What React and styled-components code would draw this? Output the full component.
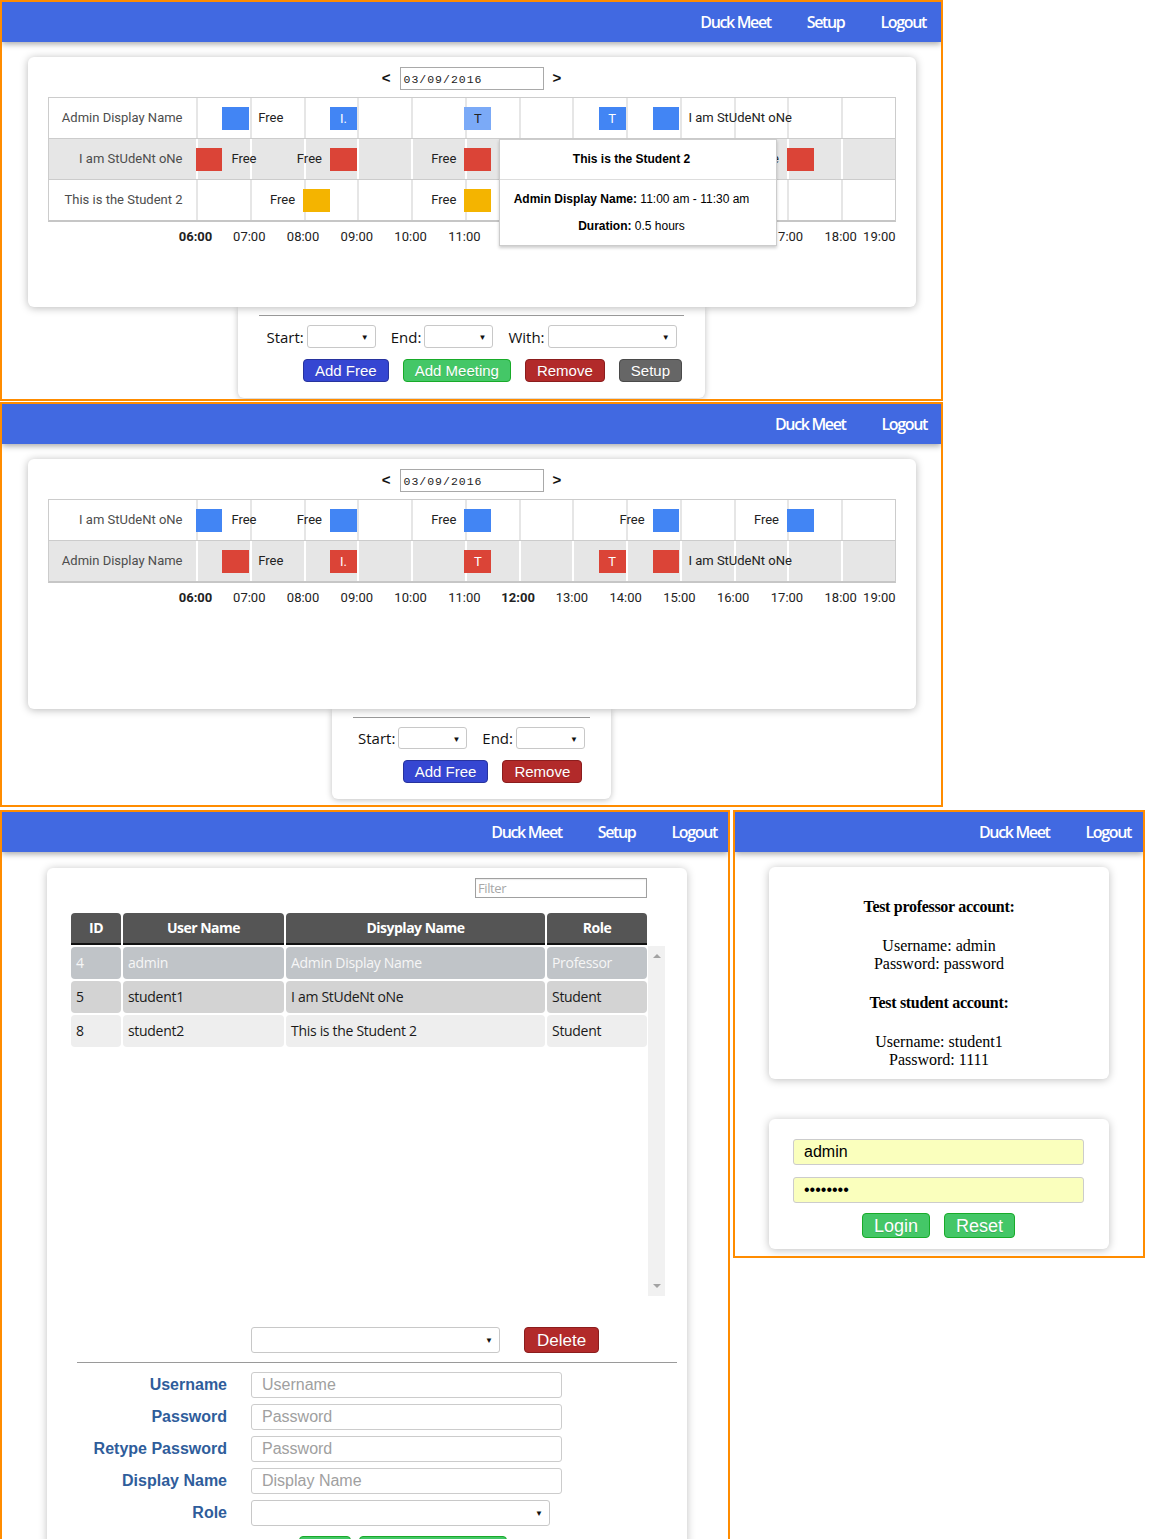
import React from 'react'
import styled, { createGlobalStyle } from 'styled-components'

const HOUR = 699 / 13
const BLUE = '#4285f4'
const RED = '#db4437'
const YELLOW = '#f4b400'
const HOVER = '#7baaf7'

const GlobalStyle = createGlobalStyle`
  html, body {
    margin: 0;
    padding: 0;
    background: #fff;
  }
  body {
    font-family: "Liberation Sans", Arial, sans-serif;
    color: #000;
  }
  * {
    box-sizing: border-box;
  }
`

const Collage = styled.div`
  width: 1151px;
  height: 1539px;
  overflow: hidden;
  display: flex;
  flex-direction: column;
  gap: 1px;
`

const BottomRow = styled.div`
  display: flex;
  align-items: flex-start;
  gap: 3px;
  margin-top: 2px;
`

const Frame = styled.section`
  width: ${p => p.$w}px;
  height: ${p => p.$h}px;
  flex: none;
  border: 2px solid #ff8c00;
  background: #fff;
  overflow: hidden;
  display: flex;
  flex-direction: column;
`

const TopBar = styled.header`
  flex: none;
  height: 40px;
  background: #4169e1;
  box-shadow: 0 2px 6px rgba(0, 0, 0, 0.35);
  display: flex;
  justify-content: flex-end;
  align-items: center;
  gap: 36px;
  padding-right: ${p => p.$pr || 14}px;
  position: relative;
  z-index: 3;
`

const NavLink = styled.span`
  color: #fff;
  font-family: "Open Sans", sans-serif;
  font-weight: 600;
  font-size: 16px;
  letter-spacing: -1.35px;
`

/* schedule card */

const ScheduleCard = styled.div`
  position: relative;
  z-index: 2;
  width: 888px;
  height: 250px;
  margin: 15px auto 0;
  padding: 10px 20px 0;
  background: #fff;
  border-radius: 6px;
  box-shadow: 0 1px 8px rgba(0, 0, 0, 0.28);
`

const DateRow = styled.div`
  display: flex;
  justify-content: center;
  align-items: center;
  gap: 9px;
  height: 23px;
`

const Chevron = styled.span`
  font-size: 15px;
  font-weight: bold;
  color: #111;
  margin-top: -3px;
`

const DateInput = styled.div`
  width: 144px;
  height: 23px;
  border: 1px solid #a9a9a9;
  padding: 0 3px;
  font-family: "Liberation Mono", monospace;
  font-size: 11.5px;
  letter-spacing: 1px;
  line-height: 23px;
  color: #222;
`

const ChartBox = styled.div`
  position: relative;
  margin-top: 7px;
  border: 1px solid #ccc;
  border-bottom: 2px solid #c6c6c6;
`

const ChartRow = styled.div`
  display: grid;
  grid-template-columns: 147px 699px;
  height: 40px;
  background: ${p => (p.$shade ? '#e6e6e6' : '#fff')};
  & + & {
    height: 41px;
    border-top: 1px solid #ccc;
  }
`

const RowLabel = styled.div`
  font-family: Roboto, sans-serif;
  font-size: 13px;
  color: #4d4d4d;
  text-align: right;
  padding-right: 13px;
  line-height: 40px;
  white-space: nowrap;
`

const Track = styled.div`
  position: relative;
  height: 40px;
  background-image: repeating-linear-gradient(
    to right,
    ${p => (p.$shade ? '#fff' : '#e6e6e6')} 0 2px,
    transparent 2px ${HOUR}px
  );
`

const Bar = styled.div`
  position: absolute;
  top: 9px;
  height: 23px;
  background: ${p => p.$color};
  color: ${p => (p.$dark ? '#222' : '#fff')};
  font-family: Roboto, sans-serif;
  font-size: 13px;
  line-height: 23px;
  text-align: center;
`

const BarText = styled.span`
  position: absolute;
  top: 0;
  line-height: 40px;
  font-family: Roboto, sans-serif;
  font-size: 13px;
  color: #222;
  white-space: nowrap;
`

const Axis = styled.div`
  position: relative;
  height: 30px;
  width: 699px;
  margin-left: 148px;
  font-family: Roboto, sans-serif;
  font-size: 13px;
  color: #222;
`

const AxisTick = styled.span`
  position: absolute;
  top: 7px;
  font-weight: ${p => (p.$bold ? 'bold' : 'normal')};
  ${p => (p.$end ? 'right: -1px;' : 'transform: translateX(-50%);')}
`

const Tooltip = styled.div`
  position: absolute;
  left: 450px;
  top: 41px;
  z-index: 5;
  width: 278px;
  height: 107px;
  background: #fff;
  border: 1px solid #ccc;
  box-shadow: 0 2px 3px rgba(0, 0, 0, 0.2);
  font-family: "Liberation Sans", Arial, sans-serif;
  font-size: 12px;
  text-align: center;
  color: #000;
`

const TipTitle = styled.div`
  height: 40px;
  line-height: 38px;
  font-weight: bold;
  padding-right: 12px;
  border-bottom: 1px solid #ddd;
`

const TipBody = styled.div`
  display: flex;
  flex-direction: column;
  gap: 9px;
  padding: 10px 12px 0 0;
  line-height: 18px;
  b {
    font-weight: bold;
  }
`

/* controls under schedule */

const ControlsCard = styled.div`
  width: ${p => p.$w}px;
  margin: 0 auto;
  padding: 8px 21px 16px;
  background: #fff;
  border-radius: 0 0 6px 6px;
  box-shadow: 0 1px 6px rgba(0, 0, 0, 0.25);
`

const Rule = styled.div`
  border-top: 1px solid #9a9a9a;
  margin: ${p => p.$m || '0'};
`

const FieldRow = styled.div`
  display: flex;
  justify-content: center;
  align-items: center;
  gap: 15px;
  margin-top: 9px;
`

const Field = styled.label`
  display: flex;
  align-items: center;
  gap: 3px;
  font-family: "Open Sans", sans-serif;
  font-size: 15px;
  color: #111;
`

const FakeSelect = styled.div`
  width: ${p => p.$w}px;
  height: ${p => p.$h || 23}px;
  border: 1px solid #c8c8c8;
  border-radius: 3px;
  background: #fff;
  display: flex;
  justify-content: flex-end;
  align-items: center;
  padding-right: 6px;
  &::after {
    content: '▼';
    font-size: 8px;
    color: #111;
  }
`

const ButtonRow = styled.div`
  display: flex;
  justify-content: center;
  gap: 14px;
  padding-left: 42px;
  margin-top: 11px;
`

const tones = {
  blue: ['#3546d2', '#27339e'],
  green: ['#44c767', '#18ab29'],
  red: ['#b22a2a', '#8b1d1d'],
  grey: ['#666', '#4a4a4a'],
}

const Btn = styled.button`
  height: ${p => p.$h || 23}px;
  width: ${p => (p.$w ? `${p.$w}px` : 'auto')};
  padding: 0 ${p => p.$px || 11}px;
  border: 1px solid ${p => tones[p.$tone][1]};
  border-radius: 4px;
  background: ${p => tones[p.$tone][0]};
  color: #fff;
  font-family: "Liberation Sans", Arial, sans-serif;
  font-size: ${p => p.$fs || 15}px;
  line-height: 1;
  text-shadow: 0 1px 0 rgba(0, 0, 0, 0.15);
`

/* admin page */

const AdminCard = styled.div`
  position: relative;
  z-index: 1;
  width: 640px;
  min-height: 720px;
  margin: 16px 0 0 45px;
  padding: 10px 0 0 24px;
  background: #fff;
  border-radius: 6px;
  box-shadow: 0 1px 8px rgba(0, 0, 0, 0.25);
`

const FilterRow = styled.div`
  display: flex;
  justify-content: flex-end;
  width: 576px;
`

const FilterInput = styled.input`
  width: 172px;
  height: 20px;
  border: 1px solid #a0a0a0;
  box-shadow: inset 0 1px 1px rgba(0, 0, 0, 0.08);
  padding: 0 2px;
  font-family: "Open Sans", sans-serif;
  font-size: 13px;
  letter-spacing: -0.4px;
  outline: none;
  &::placeholder {
    color: #a8a8a8;
  }
`

const GridCols = styled.div`
  display: grid;
  grid-template-columns: 50px 161px 259px 100px;
  gap: 2px;
  width: 576px;
`

const HeadRow = styled(GridCols)`
  margin-top: 15px;
`

const HeadCell = styled.div`
  height: 30px;
  background: #555;
  border-radius: 4px 4px 0 0;
  box-shadow: 0 2px 0 #111;
  color: #fff;
  font-family: "Open Sans", sans-serif;
  font-weight: 700;
  font-size: 14px;
  letter-spacing: -0.5px;
  line-height: 30px;
  text-align: center;
`

const BodyArea = styled.div`
  display: flex;
  margin-top: 3px;
`

const RowsCol = styled.div`
  display: flex;
  flex-direction: column;
  gap: 2px;
  padding-top: 1px;
  width: 576px;
`

const rowTones = {
  active: ['#c0c4c8', '#f6f6f6'],
  mid: ['#d3d3d3', '#1a1a1a'],
  light: ['#eeeeee', '#1a1a1a'],
}

const DataCell = styled.div`
  height: 32px;
  padding-left: 5px;
  border-radius: 4px;
  background: ${p => rowTones[p.$tone][0]};
  color: ${p => rowTones[p.$tone][1]};
  font-family: "Open Sans", sans-serif;
  font-size: 14px;
  letter-spacing: -0.3px;
  line-height: 32px;
  white-space: nowrap;
`

const ScrollTrack = styled.div`
  width: 17px;
  height: 350px;
  margin-left: 1px;
  padding: 8px 0;
  background: #f1f1f1;
  display: flex;
  flex-direction: column;
  justify-content: space-between;
  align-items: center;
`

const ScrollArrow = styled.span`
  width: 0;
  height: 0;
  border-left: 4px solid transparent;
  border-right: 4px solid transparent;
  ${p => (p.$down ? 'border-top: 4px solid #a3a3a3;' : 'border-bottom: 4px solid #a3a3a3;')}
`

const EditSection = styled.div`
  margin: 31px 10px 0 6px;
`

const FormGrid = styled.div`
  display: grid;
  grid-template-columns: 150px ${p => p.$second || '311px'} ${p => p.$third || ''};
  column-gap: 24px;
  row-gap: 6px;
  align-items: center;
  margin-top: ${p => p.$mt || 0}px;
`

const FormLabel = styled.label`
  text-align: right;
  font-weight: bold;
  font-size: 16px;
  color: #2f5d9b;
  line-height: 26px;
`

const TextInput = styled.input`
  width: 311px;
  height: 26px;
  border: 1px solid #ccc;
  border-radius: 3px;
  padding: 0 10px;
  font-family: "Liberation Sans", Arial, sans-serif;
  font-size: 16px;
  outline: none;
  &::placeholder {
    color: #a0a0a0;
  }
`

const FormButtons = styled.div`
  display: flex;
  gap: 8px;
  padding-left: 48px;
  margin-top: 4px;
`

/* login page */

const InfoCard = styled.div`
  width: 340px;
  margin: 15px auto 0;
  padding: 30px 0 10px;
  background: #fff;
  border-radius: 6px;
  box-shadow: 0 1px 8px rgba(0, 0, 0, 0.25);
  display: flex;
  flex-direction: column;
  gap: 20px;
  text-align: center;
  font-family: "Liberation Serif", "Times New Roman", serif;
`

const InfoTitle = styled.h4`
  margin: 0;
  font-size: 16px;
  font-weight: bold;
  letter-spacing: -0.3px;
  line-height: 20px;
`

const InfoText = styled.p`
  margin: 0;
  font-size: 16px;
  line-height: 18px;
`

const LoginCard = styled.div`
  width: 340px;
  margin: 40px auto 0;
  padding: 20px 25px 11px 24px;
  background: #fff;
  border-radius: 6px;
  box-shadow: 0 1px 8px rgba(0, 0, 0, 0.25);
  display: flex;
  flex-direction: column;
  gap: 12px;
`

const LoginInput = styled.input`
  width: 100%;
  height: 26px;
  background: #faffbd;
  border: 1px solid #ccc;
  border-radius: 3px;
  padding: 0 10px;
  font-family: "Liberation Sans", Arial, sans-serif;
  font-size: 16px;
  color: #000;
  outline: none;
`

const LoginButtons = styled.div`
  display: flex;
  justify-content: center;
  gap: 14px;
  margin-top: -2px;
`

/* data */

const firstRows = [
  {
    name: 'Admin Display Name',
    color: BLUE,
    bars: [
      { at: 6.5, text: 'Free', side: 'right' },
      { at: 8.5, text: 'I.', side: 'in' },
      { at: 11, text: 'T', side: 'in', hover: true },
      { at: 13.5, text: 'T', side: 'in' },
      { at: 14.5, text: 'I am StUdeNt oNe', side: 'right' },
    ],
  },
  {
    name: 'I am StUdeNt oNe',
    color: RED,
    bars: [
      { at: 6, text: 'Free', side: 'right' },
      { at: 8.5, text: 'Free', side: 'left' },
      { at: 11, text: 'Free', side: 'left' },
      { at: 17, text: 'Free', side: 'left' },
    ],
  },
  {
    name: 'This is the Student 2',
    color: YELLOW,
    bars: [
      { at: 8, text: 'Free', side: 'left' },
      { at: 11, text: 'Free', side: 'left' },
    ],
  },
]

const secondRows = [
  {
    name: 'I am StUdeNt oNe',
    color: BLUE,
    bars: [
      { at: 6, text: 'Free', side: 'right' },
      { at: 8.5, text: 'Free', side: 'left' },
      { at: 11, text: 'Free', side: 'left' },
      { at: 14.5, text: 'Free', side: 'left' },
      { at: 17, text: 'Free', side: 'left' },
    ],
  },
  {
    name: 'Admin Display Name',
    color: RED,
    bars: [
      { at: 6.5, text: 'Free', side: 'right' },
      { at: 8.5, text: 'I.', side: 'in' },
      { at: 11, text: 'T', side: 'in' },
      { at: 13.5, text: 'T', side: 'in' },
      { at: 14.5, text: 'I am StUdeNt oNe', side: 'right' },
    ],
  },
]

const users = [
  { id: 4, user: 'admin', display: 'Admin Display Name', role: 'Professor', tone: 'active' },
  { id: 5, user: 'student1', display: 'I am StUdeNt oNe', role: 'Student', tone: 'mid' },
  { id: 8, user: 'student2', display: 'This is the Student 2', role: 'Student', tone: 'light' },
]

const allHours = [6, 7, 8, 9, 10, 11, 12, 13, 14, 15, 16, 17, 18, 19]
// hours 12-16 sit under the open tooltip in the first view
const visibleHours = [6, 7, 8, 9, 10, 11, 17, 18, 19]

const Nav = ({ items, pr }) => (
  <TopBar $pr={pr}>
    {items.map(item => (
      <NavLink key={item}>{item}</NavLink>
    ))}
  </TopBar>
)

const Timeline = ({ rows, hours, boldHours, tooltip }) => (
  <>
    <ChartBox>
      {rows.map((row, i) => (
        <ChartRow key={row.name} $shade={i % 2 === 1}>
          <RowLabel>{row.name}</RowLabel>
          <Track $shade={i % 2 === 1}>
            {row.bars.map((b, j) => {
              const left = (b.at - 6) * HOUR
              const width = HOUR / 2
              return (
                <React.Fragment key={j}>
                  <Bar style={{ left, width }} $color={b.hover ? HOVER : row.color} $dark={b.hover}>
                    {b.side === 'in' ? b.text : null}
                  </Bar>
                  {b.side === 'right' && <BarText style={{ left: left + width + 9 }}>{b.text}</BarText>}
                  {b.side === 'left' && <BarText style={{ right: 699 - left + 8 }}>{b.text}</BarText>}
                </React.Fragment>
              )
            })}
          </Track>
        </ChartRow>
      ))}
      {tooltip}
    </ChartBox>
    <Axis>
      {hours.map(h => {
        const end = h === 19
        return (
          <AxisTick
            key={h}
            $end={end}
            $bold={boldHours.includes(h)}
            style={end ? undefined : { left: (h - 6) * HOUR }}
          >
            {String(h).padStart(2, '0')}:00
          </AxisTick>
        )
      })}
    </Axis>
  </>
)

const DatePicker = () => (
  <DateRow>
    <Chevron>&lt;</Chevron>
    <DateInput>03/09/2016</DateInput>
    <Chevron>&gt;</Chevron>
  </DateRow>
)

const App = () => {
  return (
    <Collage>
      <GlobalStyle />

      <Frame $w={943} $h={401}>
        <Nav items={['Duck Meet', 'Setup', 'Logout']} pr={15} />
        <ScheduleCard>
          <DatePicker />
          <Timeline
            rows={firstRows}
            hours={visibleHours}
            boldHours={[6, 12]}
            tooltip={
              <Tooltip>
                <TipTitle>This is the Student 2</TipTitle>
                <TipBody>
                  <div>
                    <b>Admin Display Name:</b> 11:00 am - 11:30 am
                  </div>
                  <div>
                    <b>Duration:</b> 0.5 hours
                  </div>
                </TipBody>
              </Tooltip>
            }
          />
        </ScheduleCard>
        <ControlsCard $w={467}>
          <Rule />
          <FieldRow>
            <Field>
              Start:
              <FakeSelect $w={69} />
            </Field>
            <Field>
              End:
              <FakeSelect $w={69} />
            </Field>
            <Field>
              With:
              <FakeSelect $w={129} />
            </Field>
          </FieldRow>
          <ButtonRow>
            <Btn $tone="blue">Add Free</Btn>
            <Btn $tone="green">Add Meeting</Btn>
            <Btn $tone="red">Remove</Btn>
            <Btn $tone="grey">Setup</Btn>
          </ButtonRow>
        </ControlsCard>
      </Frame>

      <Frame $w={943} $h={405}>
        <Nav items={['Duck Meet', 'Logout']} />
        <ScheduleCard>
          <DatePicker />
          <Timeline rows={secondRows} hours={allHours} boldHours={[6, 12]} />
        </ScheduleCard>
        <ControlsCard $w={279}>
          <Rule />
          <FieldRow>
            <Field>
              Start:
              <FakeSelect $w={69} $h={22} />
            </Field>
            <Field>
              End:
              <FakeSelect $w={69} $h={22} />
            </Field>
          </FieldRow>
          <ButtonRow>
            <Btn $tone="blue">Add Free</Btn>
            <Btn $tone="red">Remove</Btn>
          </ButtonRow>
        </ControlsCard>
      </Frame>

      <BottomRow>
        <Frame $w={730} $h={760}>
          <Nav items={['Duck Meet', 'Setup', 'Logout']} pr={11} />
          <AdminCard>
            <FilterRow>
              <FilterInput placeholder="Filter" />
            </FilterRow>
            <HeadRow>
              <HeadCell>ID</HeadCell>
              <HeadCell>User Name</HeadCell>
              <HeadCell>Disyplay Name</HeadCell>
              <HeadCell>Role</HeadCell>
            </HeadRow>
            <BodyArea>
              <RowsCol>
                {users.map(u => (
                  <GridCols key={u.id}>
                    <DataCell $tone={u.tone}>{u.id}</DataCell>
                    <DataCell $tone={u.tone}>{u.user}</DataCell>
                    <DataCell $tone={u.tone}>{u.display}</DataCell>
                    <DataCell $tone={u.tone}>{u.role}</DataCell>
                  </GridCols>
                ))}
              </RowsCol>
              <ScrollTrack>
                <ScrollArrow />
                <ScrollArrow $down />
              </ScrollTrack>
            </BodyArea>
            <EditSection>
              <FormGrid $second="249px" $third="auto">
                <span />
                <FakeSelect $w={249} $h={26} />
                <div>
                  <Btn $tone="red" $h={26} $fs={17} $px={12}>Delete</Btn>
                </div>
              </FormGrid>
              <Rule $m="9px 0 0" />
              <FormGrid $mt={9}>
                <FormLabel>Username</FormLabel>
                <TextInput placeholder="Username" />
                <FormLabel>Password</FormLabel>
                <TextInput placeholder="Password" />
                <FormLabel>Retype Password</FormLabel>
                <TextInput placeholder="Password" />
                <FormLabel>Display Name</FormLabel>
                <TextInput placeholder="Display Name" />
                <FormLabel>Role</FormLabel>
                <FakeSelect $w={299} $h={26} />
                <span />
                <FormButtons>
                  <Btn $tone="green" $h={25} $w={52} aria-label="Add" />
                  <Btn $tone="green" $h={25} $w={148} aria-label="Update" />
                </FormButtons>
              </FormGrid>
            </EditSection>
          </AdminCard>
        </Frame>

        <Frame $w={412} $h={448}>
          <Nav items={['Duck Meet', 'Logout']} pr={12} />
          <InfoCard>
            <InfoTitle>Test professor account:</InfoTitle>
            <InfoText>
              Username: admin
              <br />
              Password: password
            </InfoText>
            <InfoTitle>Test student account:</InfoTitle>
            <InfoText>
              Username: student1
              <br />
              Password: 1111
            </InfoText>
          </InfoCard>
          <LoginCard>
            <LoginInput defaultValue="admin" />
            <LoginInput type="password" defaultValue="password" />
            <LoginButtons>
              <Btn $tone="green" $h={25} $fs={18} $px={11}>Login</Btn>
              <Btn $tone="green" $h={25} $fs={18} $px={11}>Reset</Btn>
            </LoginButtons>
          </LoginCard>
        </Frame>
      </BottomRow>
    </Collage>
  )
}

export default App
